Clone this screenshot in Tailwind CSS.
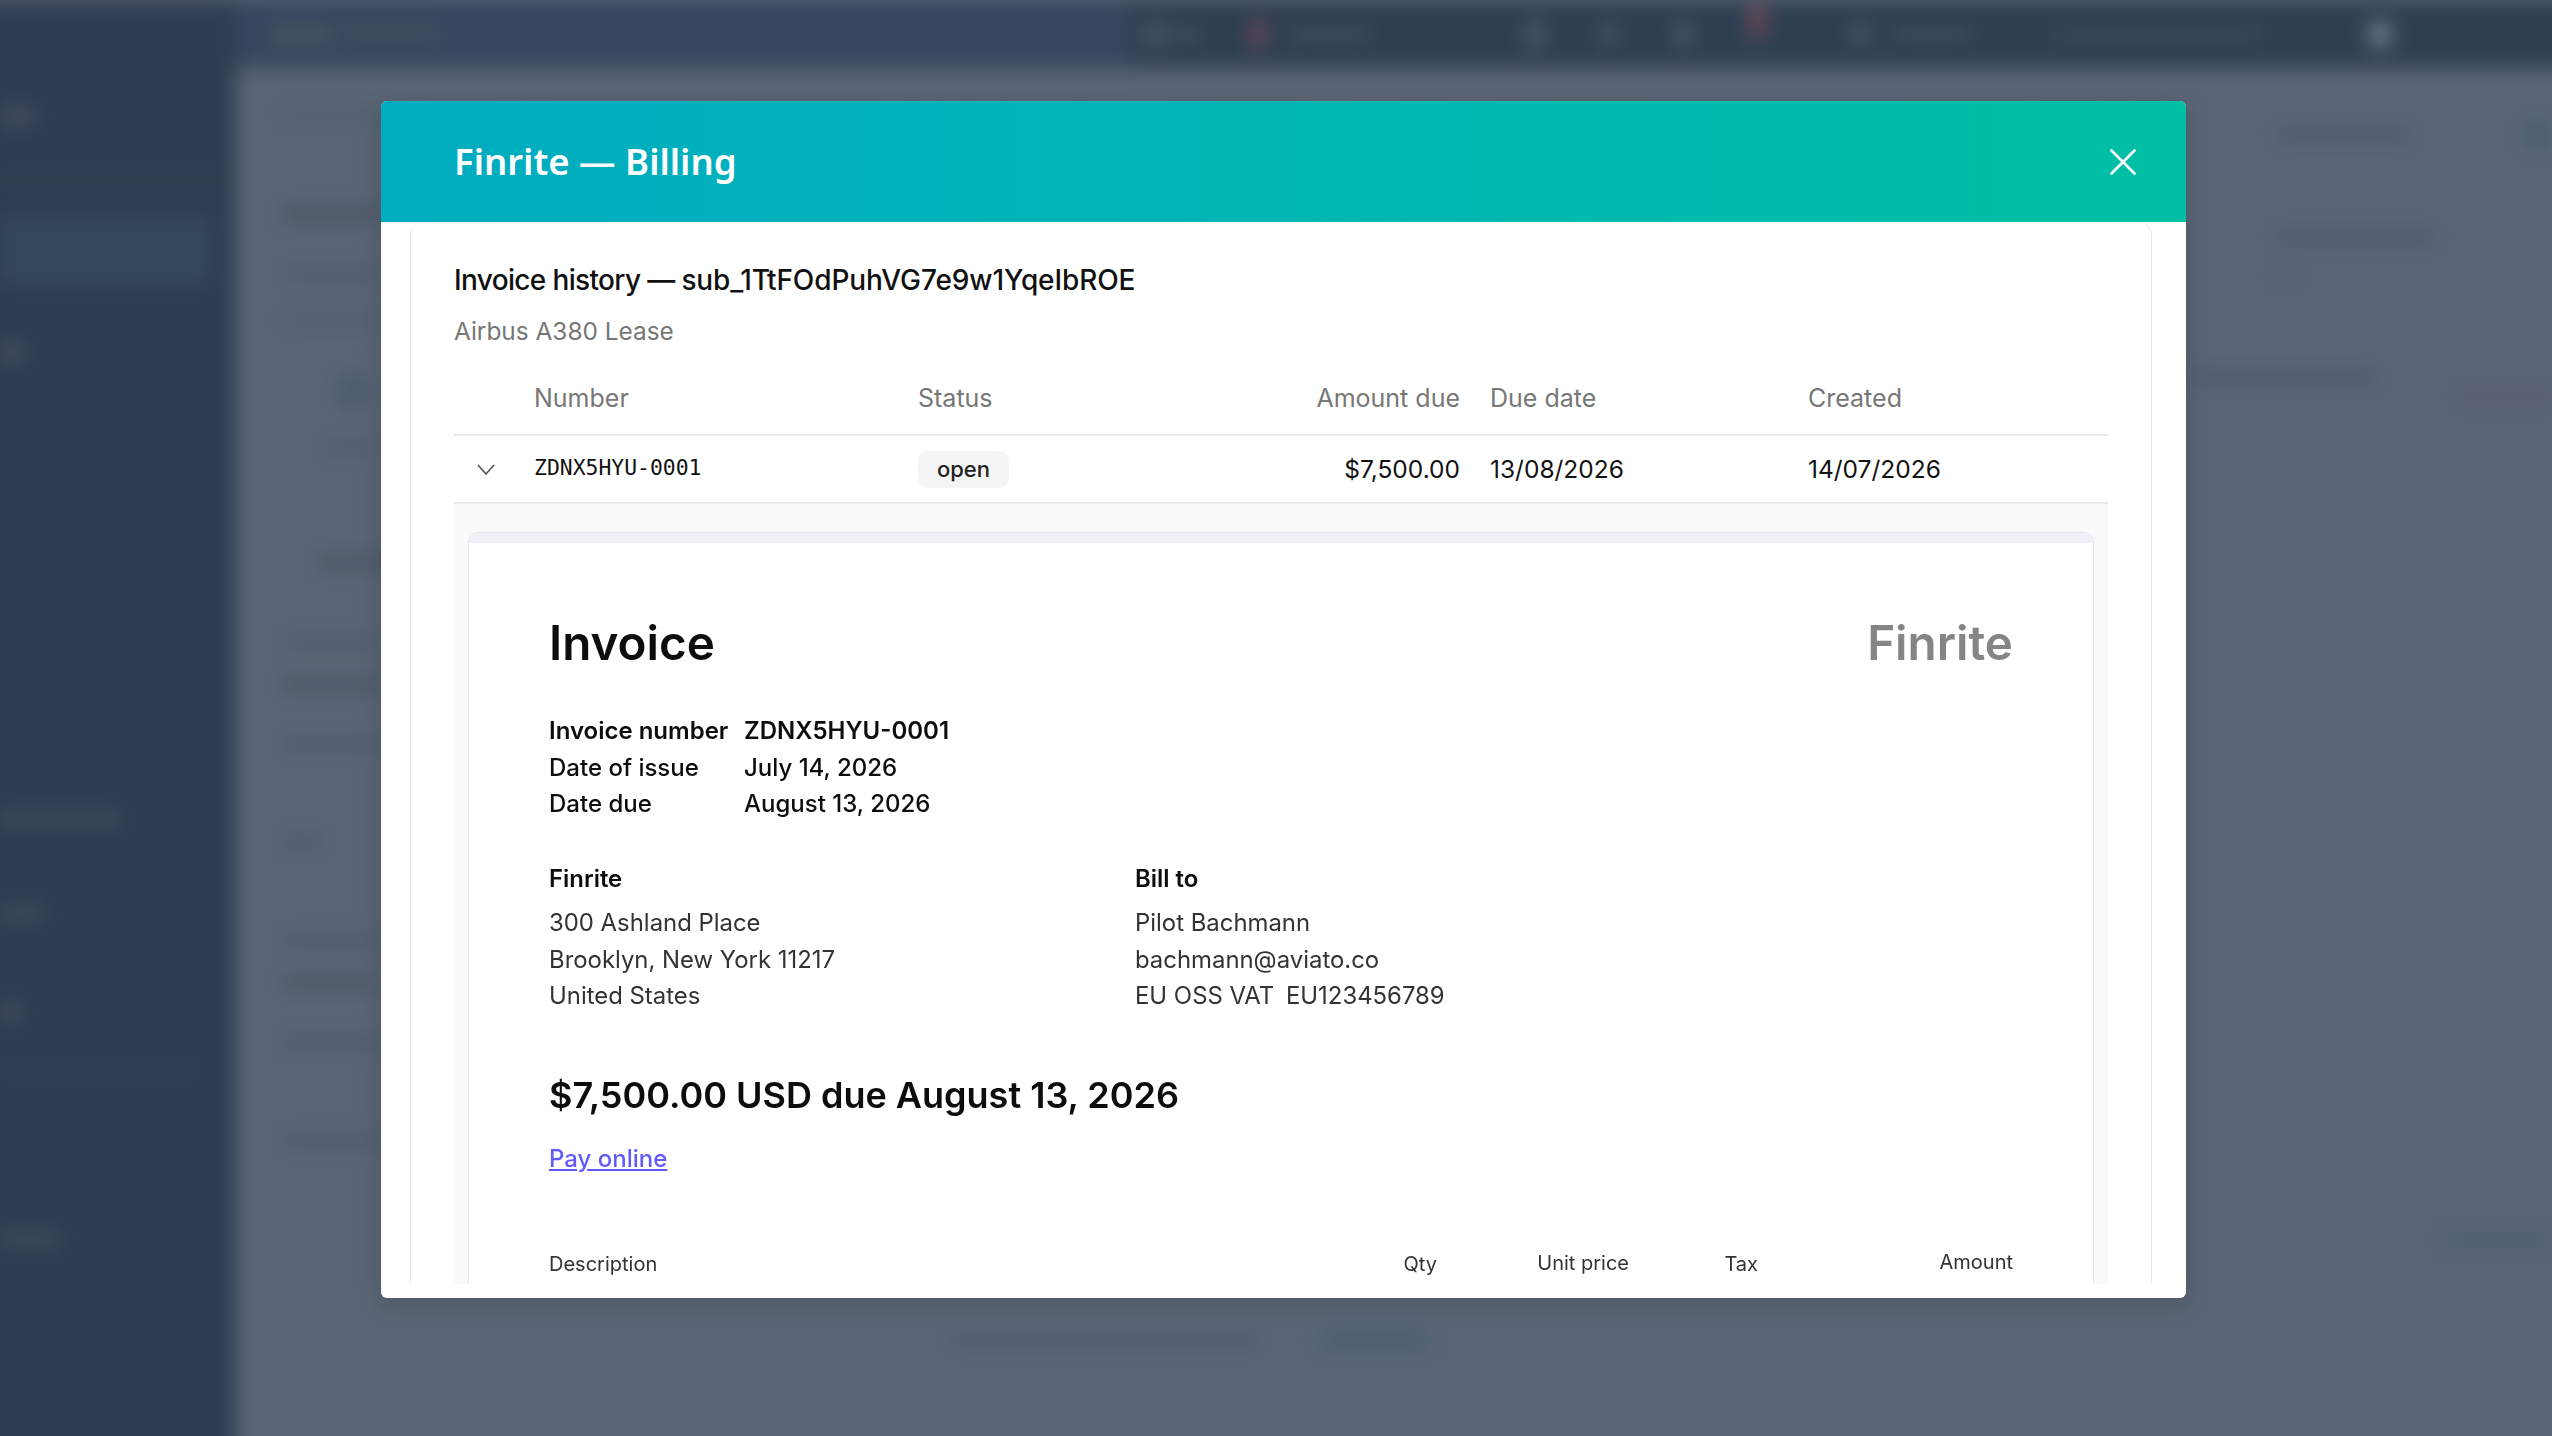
<!DOCTYPE html>
<html lang="en">
<head>
  <meta charset="UTF-8" />
  <title>Finrite — Billing</title>
  <script src="https://cdn.jsdelivr.net/npm/@tailwindcss/browser@4"></script>
</head>
<body class="bg-[#5a6575] font-['Inter',sans-serif]">
  <div class="relative w-[2552px] h-[1436px] overflow-hidden">

    <!-- Dimmed, blurred app behind the modal -->
    <div class="absolute -left-[30px] top-0 -right-[30px] -bottom-[30px] flex bg-[#5a6575] blur-[10px]">
      <!-- Sidebar -->
      <div class="w-[266px] pl-[30px] shrink-0 bg-[#2e3c53] border-r-[10px] border-[#2d3f50] flex flex-col">
        <div class="h-[186px] border-b-[14px] border-[#2e3f50] pt-[108px]">
          <div class="w-[34px] h-[16px] bg-[#46525e]"></div>
        </div>
        <div class="h-[68px] mt-[30px] w-[210px] bg-[#33485c]"></div>
        <div class="w-[24px] h-[16px] mt-[60px] bg-[#46525e]"></div>
        <div class="w-[120px] h-[16px] mt-[451px] bg-[#3d4b5a]"></div>
        <div class="w-[44px] h-[16px] mt-[78px] bg-[#3d4b5a]"></div>
        <div class="w-[20px] h-[16px] mt-[83px] bg-[#46525e]"></div>
        <div class="w-[200px] h-[12px] mt-[45px] bg-[#2e3f50]"></div>
        <div class="w-[60px] h-[16px] mt-[154px] bg-[#3d4b5a]"></div>
      </div>

      <div class="flex-1 flex flex-col">
        <!-- Top bar -->
        <div class="h-[68px] shrink-0 bg-[#2e3f52] flex items-center">
          <div class="w-[894px] h-full bg-[#34475e] flex items-center pl-[36px] gap-[10px]">
            <div class="w-[60px] h-[18px] bg-[#465661]"></div>
            <div class="w-[100px] h-[14px] bg-[#414f5f]"></div>
          </div>
          <div class="w-[20px] h-[26px] ml-[14px] rounded-full bg-[#4a5a6b]"></div>
          <div class="w-[28px] h-[14px] ml-[8px] bg-[#414f5f]"></div>
          <div class="w-[12px] h-[30px] ml-[52px] rounded-full bg-[#7a4a55]"></div>
          <div class="w-[80px] h-[14px] ml-[26px] bg-[#3e4d5d]"></div>
          <div class="w-[14px] h-[30px] ml-[158px] rounded-full bg-[#526173]"></div>
          <div class="w-[14px] h-[24px] ml-[60px] rounded-full bg-[#4a5a6b]"></div>
          <div class="w-[14px] h-[24px] ml-[60px] rounded-full bg-[#526173]"></div>
          <div class="w-[14px] h-[36px] mb-[28px] ml-[60px] rounded-full bg-[#7a4a55]"></div>
          <div class="w-[18px] h-[22px] ml-[88px] rounded-full bg-[#4a5a6b]"></div>
          <div class="w-[80px] h-[14px] ml-[22px] bg-[#3e4d5d]"></div>
          <div class="w-[210px] h-[14px] ml-[80px] bg-[#3a4a5b]"></div>
          <div class="w-[24px] h-[28px] ml-[106px] rounded-full bg-[#6c7c8a]"></div>
        </div>

        <!-- Main content -->
        <div class="w-[149px] shrink-0 pl-[46px] flex flex-col">
          <div class="w-[99px] h-[10px] mt-[42px] bg-[#4c6070]"></div>
          <div class="w-[99px] h-[14px] mt-[88px] bg-[#4a5463]"></div>
          <div class="w-[99px] h-[10px] mt-[47px] bg-[#4e5a69]"></div>
          <div class="w-[99px] h-[10px] mt-[36px] bg-[#4c6070]"></div>
          <div class="w-[34px] h-[34px] mt-[49px] ml-[54px] rounded-full bg-[#4a5a70]"></div>
          <div class="w-[50px] h-[10px] mt-[34px] ml-[40px] bg-[#4e5a69]"></div>
          <div class="w-[99px] h-[12px] mt-[104px] ml-[35px] bg-[#4a5463]"></div>
          <div class="w-[99px] h-[10px] mt-[70px] bg-[#4e5a69]"></div>
          <div class="w-[99px] h-[12px] mt-[31px] bg-[#4a5463]"></div>
          <div class="w-[99px] h-[12px] mt-[47px] bg-[#4e5a69]"></div>
          <div class="w-[40px] h-[12px] mt-[86px] bg-[#4e5a69]"></div>
          <div class="w-[99px] h-[12px] mt-[87px] bg-[#4e5a69]"></div>
          <div class="w-[99px] h-[12px] mt-[30px] bg-[#4a5463]"></div>
          <div class="w-[99px] h-[12px] mt-[47px] bg-[#4e5a69]"></div>
          <div class="w-[99px] h-[12px] mt-[87px] bg-[#4e5a69]"></div>
        </div>
      </div>

      <!-- Right of the modal -->
      <div class="absolute left-[2216px] right-[30px] top-[68px] bottom-[30px] flex flex-col">
        <div class="flex items-center justify-between h-[26px] mt-[54px] pl-[89px]">
          <div class="w-[136px] h-[14px] bg-[#4f5c6c]"></div>
          <div class="w-[30px] h-[30px] rounded-full bg-[#48606f]"></div>
        </div>
        <div class="w-[160px] h-[14px] mt-[82px] ml-[89px] bg-[#4f5c6c]"></div>
        <div class="w-[24px] h-[14px] mt-[26px] ml-[89px] bg-[#545f6e]"></div>
        <div class="flex items-start mt-[86px] gap-[80px]">
          <div class="w-[190px] h-[14px] bg-[#4f5c6c]"></div>
          <div class="flex-1 h-[14px] mt-[20px] bg-[#5b5c70]"></div>
        </div>
        <div class="flex justify-end mt-[829px]">
          <div class="w-[110px] h-[14px] bg-[#4c6070]"></div>
        </div>
      </div>
      <div class="absolute left-[980px] bottom-[118px] flex items-center gap-[60px]">
        <div class="w-[310px] h-[12px] bg-[#4f5c6c]"></div>
        <div class="w-[110px] h-[16px] bg-[#466072]"></div>
      </div>
    </div>

    <!-- Modal -->
    <div class="absolute left-[381px] top-[101px] w-[1805px] h-[1197px] bg-white rounded-[6px] shadow-[0_6px_24px_rgba(0,0,0,0.15)] flex flex-col overflow-hidden">
      <div class="h-[121px] shrink-0 pl-[73px] pr-[50px] flex items-center justify-between bg-gradient-to-r from-[#00acc1] to-[#00bfa5]">
        <h1 class="text-white text-[36.5px] font-semibold font-['Noto_Sans',sans-serif]">Finrite — Billing</h1>
        <svg class="w-[26px] h-[26px] text-white" viewBox="0 0 26 26" fill="none" stroke="currentColor" stroke-width="2.6" stroke-linecap="round">
          <path d="M1.5 1.5 24.5 24.5M24.5 1.5 1.5 24.5" />
        </svg>
      </div>

      <div class="flex-1 min-h-0 pl-[29px] pr-[34px] pb-[14px] flex">
        <div class="flex-1 min-w-0 border-x border-[#e6e6e6] rounded-t-[14px] px-[43px] pt-[40px] overflow-hidden">
          <h2 class="text-[28px] leading-[36px] font-medium text-[#111]"><span class="tracking-[-0.65px]">Invoice history — </span><span class="tracking-[-0.1px]">sub_1TtFOdPuhVG7e9w1YqeIbROE</span></h2>
          <p class="mt-[15px] text-[24.4px] leading-[36px] text-[#777]">Airbus A380 Lease</p>

          <!-- Invoice table -->
          <div class="grid grid-cols-[80px_384px_542px_348px_1fr] mt-[31px] text-[25px] leading-[36px]">
            <div class="h-[56px] border-b-2 border-[#e8e8e8]"></div>
            <div class="h-[56px] border-b-2 border-[#e8e8e8] text-[#777]">Number</div>
            <div class="h-[56px] border-b-2 border-[#e8e8e8] text-[#777] flex justify-between">
              <span>Status</span>
              <span>Amount due</span>
            </div>
            <div class="h-[56px] border-b-2 border-[#e8e8e8] text-[#777] pl-[30px]">Due date</div>
            <div class="h-[56px] border-b-2 border-[#e8e8e8] text-[#777]">Created</div>

            <div class="h-[68px] border-b-2 border-[#e8e8e8] flex items-center pl-[23px]">
              <svg class="w-[18px] h-[11px] text-[#555]" viewBox="0 0 18 11" fill="none" stroke="currentColor" stroke-width="1.6">
                <path d="M1 1l8 9 8-9" />
              </svg>
            </div>
            <div class="h-[68px] border-b-2 border-[#e8e8e8] flex items-center pb-[2px] font-['DejaVu_Sans_Mono',monospace] text-[21.4px] text-[#111]">ZDNX5HYU-0001</div>
            <div class="h-[68px] border-b-2 border-[#e8e8e8] flex items-center justify-between text-[24.5px] text-[#111]">
              <span class="w-[91px] h-[37px] rounded-[10px] bg-[#f5f5f5] flex items-center justify-center text-[22px] font-medium text-[#222]">open</span>
              <span>$7,500.00</span>
            </div>
            <div class="h-[68px] border-b-2 border-[#e8e8e8] flex items-center pl-[30px] text-[24.5px] text-[#111]">13/08/2026</div>
            <div class="h-[68px] border-b-2 border-[#e8e8e8] flex items-center text-[24.5px] text-[#111]">14/07/2026</div>
          </div>

          <!-- Expanded invoice preview -->
          <div class="bg-[#fafafa] px-[14px] pt-[28px] h-[800px]">
            <div class="h-full bg-white border border-[#e6e6ea] rounded-t-[10px] overflow-hidden">
              <div class="h-[10px] bg-[#f0f1f8]"></div>
              <div class="px-[80px] pt-[70px] blur-[0.4px] text-[#0d0d0d]">
                <div class="flex justify-between items-center h-[60px] text-[47.6px] font-semibold">
                  <span>Invoice</span>
                  <span class="text-[#858585]">Finrite</span>
                </div>

                <div class="grid grid-cols-[195px_1fr] mt-[40px] text-[24px] leading-[36.5px] font-medium">
                  <span class="font-semibold">Invoice number</span>
                  <span class="font-semibold">ZDNX5HYU-0001</span>
                  <span>Date of issue</span>
                  <span>July 14, 2026</span>
                  <span>Date due</span>
                  <span>August 13, 2026</span>
                </div>

                <div class="grid grid-cols-[586px_1fr] mt-[38px] text-[23.9px] leading-[36.5px] text-[#333]">
                  <div>
                    <p class="font-semibold text-[#0d0d0d] mb-[8px]">Finrite</p>
                    <p>300 Ashland Place</p>
                    <p>Brooklyn, New York 11217</p>
                    <p>United States</p>
                  </div>
                  <div>
                    <p class="font-semibold text-[#0d0d0d] mb-[8px]">Bill to</p>
                    <p>Pilot Bachmann</p>
                    <p>bachmann@aviato.co</p>
                    <p>EU OSS VAT <span class="ml-[5px]">EU123456789</span></p>
                  </div>
                </div>

                <p class="mt-[55px] text-[36px] leading-[50px] font-semibold">$7,500.00 USD due August 13, 2026</p>
                <a class="block mt-[21px] text-[24px] leading-[36px] font-medium text-[#625afa] underline">Pay online</a>

                <div class="flex mt-[74px] text-[20px] leading-[26px] text-[#333]">
                  <span class="flex-1">Description</span>
                  <span class="text-right">Qty</span>
                  <span class="w-[192px] text-right -mt-[1px]">Unit price</span>
                  <span class="w-[129px] text-right">Tax</span>
                  <span class="w-[255px] text-right -mt-[2px]">Amount</span>
                </div>
              </div>
            </div>
          </div>
        </div>
      </div>
    </div>
  </div>
</body>
</html>
